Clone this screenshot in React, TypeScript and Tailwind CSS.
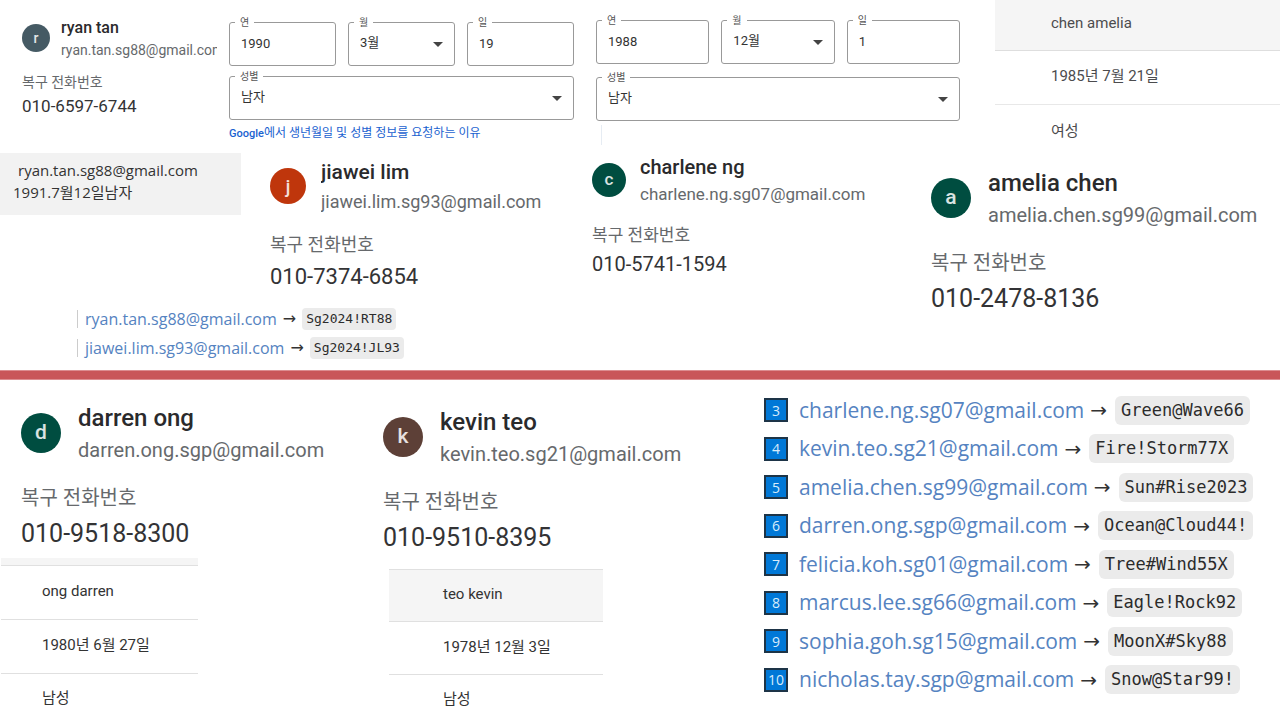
import React from "react";

type ProfileSize = "sm" | "md" | "lg" | "xl";

const sizes: Record<
  ProfileSize,
  { gap: string; avatar: string; name: string; email: string; label: string; phone: string }
> = {
  sm: {
    gap: "gap-[11px]",
    avatar: "size-7 text-sm",
    name: "text-[16px] leading-[22px]",
    email: "text-[14px] leading-[22px]",
    label: "mt-[9px] text-[14px] leading-6",
    phone: "text-[17px] leading-6",
  },
  md: {
    gap: "gap-3.5",
    avatar: "size-[34px] text-[17px]",
    name: "text-[20px] leading-[27px]",
    email: "text-[17px] leading-[27px]",
    label: "mt-[13px] text-[17px] leading-[29px]",
    phone: "text-[20px] leading-[29px]",
  },
  lg: {
    gap: "gap-[15px]",
    avatar: "size-9 text-[18px]",
    name: "text-[21px] leading-[29px]",
    email: "text-[18px] leading-[29px]",
    label: "mt-[13px] text-[18px] leading-8",
    phone: "text-[22px] leading-8",
  },
  xl: {
    gap: "gap-[17px]",
    avatar: "size-10 text-[21px]",
    name: "text-[24px] leading-8",
    email: "text-[20px] leading-8",
    label: "mt-3.5 text-[20px] leading-9",
    phone: "text-[25px] leading-9",
  },
};

function Profile({
  size,
  color,
  name,
  email,
  phone,
}: {
  size: ProfileSize;
  color: string;
  name: string;
  email: string;
  phone: string;
}) {
  const s = sizes[size];
  return (
    <article className="min-w-0">
      <header className={`flex items-center ${s.gap}`}>
        <span
          aria-hidden="true"
          className={`flex shrink-0 items-center justify-center rounded-full font-medium text-white/85 ${s.avatar} ${color}`}
        >
          {name[0]}
        </span>
        <div className="min-w-0 overflow-hidden pt-0.5 whitespace-nowrap">
          <h2 className={`font-medium text-[#2a2a2c] ${s.name}`}>{name}</h2>
          <p className={`text-[#66696c] ${s.email}`}>{email}</p>
        </div>
      </header>
      <p className={`text-[#66696c] ${s.label}`}>복구 전화번호</p>
      <p className={`text-[#333335] ${s.phone}`}>{phone}</p>
    </article>
  );
}

function Field({
  id,
  label,
  value,
  select = false,
}: {
  id: string;
  label: string;
  value: string;
  select?: boolean;
}) {
  const box =
    "h-11 w-full appearance-none rounded-[3px] border border-[#999] bg-white px-[11px] pb-0.5 text-[13px] text-[#333]";
  return (
    <div className="relative min-w-0">
      <label
        htmlFor={id}
        className="absolute -top-[7px] left-1.5 bg-white px-[5px] text-[10px] leading-4 text-[#555]"
      >
        {label}
      </label>
      {select ? (
        <>
          <select id={id} className={box} defaultValue={value}>
            <option>{value}</option>
          </select>
          <svg
            viewBox="0 0 10 5"
            aria-hidden="true"
            className="pointer-events-none absolute top-5 right-3 h-[5px] w-2.5 fill-[#444]"
          >
            <path d="M0 0h10L5 5z" />
          </svg>
        </>
      ) : (
        <input id={id} className={box} defaultValue={value} />
      )}
    </div>
  );
}

function BirthForm({
  id,
  year,
  month,
  day,
  gap,
}: {
  id: string;
  year: string;
  month: string;
  day: string;
  gap: string;
}) {
  return (
    <div className={`flex flex-col ${gap}`}>
      <div className="grid grid-cols-3 gap-3">
        <Field id={`${id}-year`} label="연" value={year} />
        <Field id={`${id}-month`} label="월" value={month} select />
        <Field id={`${id}-day`} label="일" value={day} />
      </div>
      <Field id={`${id}-gender`} label="성별" value="남자" select />
    </div>
  );
}

function Credential({
  email,
  password,
  large = false,
}: {
  email: string;
  password: string;
  large?: boolean;
}) {
  return (
    <>
      <a
        href={`mailto:${email}`}
        className={`font-['Open_Sans','Noto_Sans',sans-serif] text-[#5583c1] ${large ? "text-[21px]" : "text-[16px]"}`}
      >
        {email}
      </a>
      <span
        className={`font-['DejaVu_Sans',sans-serif] text-[#333] ${large ? "mr-2 ml-1.5 text-[20px]" : "mx-1.5 text-[16px]"}`}
      >
        →
      </span>
      <code
        className={`bg-[#ebebeb] font-['DejaVu_Sans_Mono',monospace] text-[#2b2b2b] ${
          large
            ? "rounded-md px-1.5 text-[17px] leading-[29px]"
            : "rounded px-1 text-[13px] leading-[22px]"
        }`}
      >
        {password}
      </code>
    </>
  );
}

const numbered = [
  ["3", "charlene.ng.sg07@gmail.com", "Green@Wave66"],
  ["4", "kevin.teo.sg21@gmail.com", "Fire!Storm77X"],
  ["5", "amelia.chen.sg99@gmail.com", "Sun#Rise2023"],
  ["6", "darren.ong.sgp@gmail.com", "Ocean@Cloud44!"],
  ["7", "felicia.koh.sg01@gmail.com", "Tree#Wind55X"],
  ["8", "marcus.lee.sg66@gmail.com", "Eagle!Rock92"],
  ["9", "sophia.goh.sg15@gmail.com", "MoonX#Sky88"],
  ["10", "nicholas.tay.sgp@gmail.com", "Snow@Star99!"],
];

export default function App() {
  return (
    <main className="min-h-screen bg-white font-['Roboto','Noto_Sans_CJK_KR',sans-serif]">
      <section className="grid grid-cols-[minmax(0,229fr)_minmax(0,367fr)_minmax(0,399fr)_minmax(0,285fr)]">
        <div className="pt-[15px] pr-3 pl-[22px]">
          <Profile
            size="sm"
            color="bg-[#455a64]"
            name="ryan tan"
            email="ryan.tan.sg88@gmail.com"
            phone="010-6597-6744"
          />
        </div>
        <div className="pt-[22px] pr-[22px]">
          <BirthForm id="a" year="1990" month="3월" day="19" gap="gap-2.5" />
          <a
            href="#why"
            className="mt-1 block text-[12px] leading-[18px] whitespace-nowrap text-[#1a62d0]"
          >
            <span className="text-[11px] font-medium">Google</span>에서 생년월일 및 성별 정보를
            요청하는 이유
          </a>
        </div>
        <div className="pt-5 pr-[35px]">
          <BirthForm id="b" year="1988" month="12월" day="1" gap="gap-[13px]" />
          <div className="mt-1 ml-[5px] h-5 border-l border-[#e6ecf3]" />
        </div>
        <table className="w-full border-collapse self-start text-[15px] text-[#4c4c4e]">
          <tbody>
            <tr className="h-[50px] border-b border-[#dedede] bg-[#f5f5f5]">
              <td className="pb-1 pl-14">chen amelia</td>
            </tr>
            <tr className="h-[54px] border-b border-[#e8e8e8]">
              <td className="pb-0.5 pl-14">1985년 7월 21일</td>
            </tr>
            <tr className="h-12">
              <td className="pt-1.5 pl-14">여성</td>
            </tr>
          </tbody>
        </table>
      </section>

      <section className="grid grid-cols-[minmax(0,592fr)_minmax(0,339fr)_minmax(0,349fr)] pb-2">
        <div>
          <div className="grid grid-cols-[minmax(0,241fr)_minmax(0,351fr)]">
            <div className="mt-px self-start bg-[#f2f2f2] px-[13px] pt-1.5 pb-3 font-['Open_Sans','Noto_Sans_CJK_KR',sans-serif] text-[15px] leading-[22px] whitespace-nowrap text-[#333]">
              <p className="pl-[5px]">ryan.tan.sg88@gmail.com</p>
              <p>1991.7월12일남자</p>
            </div>
            <div className="pt-1 pl-[29px]">
              <Profile
                size="lg"
                color="bg-[#bf360c]"
                name="jiawei lim"
                email="jiawei.lim.sg93@gmail.com"
                phone="010-7374-6854"
              />
            </div>
          </div>
          <ul className="mt-[11px] ml-[77px]">
            <li className="flex h-[29px] items-center whitespace-nowrap">
              <span className="mr-[7px] h-[18px] border-l border-[#ccc]" />
              <Credential email="ryan.tan.sg88@gmail.com" password="Sg2024!RT88" />
            </li>
            <li className="flex h-[29px] items-center whitespace-nowrap">
              <span className="mr-[7px] h-[18px] border-l border-[#ccc]" />
              <Credential email="jiawei.lim.sg93@gmail.com" password="Sg2024!JL93" />
            </li>
          </ul>
        </div>
        <Profile
          size="md"
          color="bg-[#004d40]"
          name="charlene ng"
          email="charlene.ng.sg07@gmail.com"
          phone="010-5741-1594"
        />
        <div className="pt-[13px]">
          <Profile
            size="xl"
            color="bg-[#004d40]"
            name="amelia chen"
            email="amelia.chen.sg99@gmail.com"
            phone="010-2478-8136"
          />
        </div>
      </section>

      <hr className="h-2.5 border-y border-[#dc8d90] bg-[#c95659]" />

      <section className="grid grid-cols-[minmax(0,383fr)_minmax(0,381fr)_minmax(0,516fr)]">
        <div className="pt-5">
          <div className="pl-[21px]">
            <Profile
              size="xl"
              color="bg-[#004d40]"
              name="darren ong"
              email="darren.ong.sgp@gmail.com"
              phone="010-9518-8300"
            />
          </div>
          <div className="mt-1.5 mr-[185px] ml-px">
            <div className="h-2 border-b border-[#e0e0e0] bg-[#f5f5f5]" />
            <table className="w-full border-collapse text-[15px] text-[#333]">
              <tbody>
                <tr className="h-[53px] border-b border-[#e0e0e0]">
                  <td className="pb-0.5 pl-[41px]">ong darren</td>
                </tr>
                <tr className="h-[54px] border-b border-[#e0e0e0]">
                  <td className="pb-0.5 pl-[41px]">1980년 6월 27일</td>
                </tr>
                <tr className="h-[46px]">
                  <td className="pt-1 pl-[41px]">남성</td>
                </tr>
              </tbody>
            </table>
          </div>
        </div>
        <div className="pt-6">
          <Profile
            size="xl"
            color="bg-[#5d4037]"
            name="kevin teo"
            email="kevin.teo.sg21@gmail.com"
            phone="010-9510-8395"
          />
          <div className="mt-[13px] mr-[161px] ml-1.5">
            <table className="w-full border-collapse text-[15px] text-[#333]">
              <tbody>
                <tr className="h-[52px] border-y border-[#e0e0e0] bg-[#f5f5f5]">
                  <td className="pb-0.5 pl-[54px]">teo kevin</td>
                </tr>
                <tr className="h-[53px] border-b border-[#e0e0e0]">
                  <td className="pb-0.5 pl-[54px]">1978년 12월 3일</td>
                </tr>
                <tr className="h-[44px]">
                  <td className="pt-1 pl-[54px]">남성</td>
                </tr>
              </tbody>
            </table>
          </div>
        </div>
        <ol className="mt-[11px] grid min-h-[308px] auto-rows-fr self-start">
          {numbered.map(([n, email, password]) => (
            <li key={n} className="flex items-center whitespace-nowrap">
              <span className="mr-[11px] flex size-6 shrink-0 items-center justify-center border-2 border-[#1d3447] bg-[#0078d7] font-['Open_Sans',sans-serif] text-[14px] text-[#d8ecfb]">
                {n}
              </span>
              <Credential email={email} password={password} large />
            </li>
          ))}
        </ol>
      </section>
    </main>
  );
}
